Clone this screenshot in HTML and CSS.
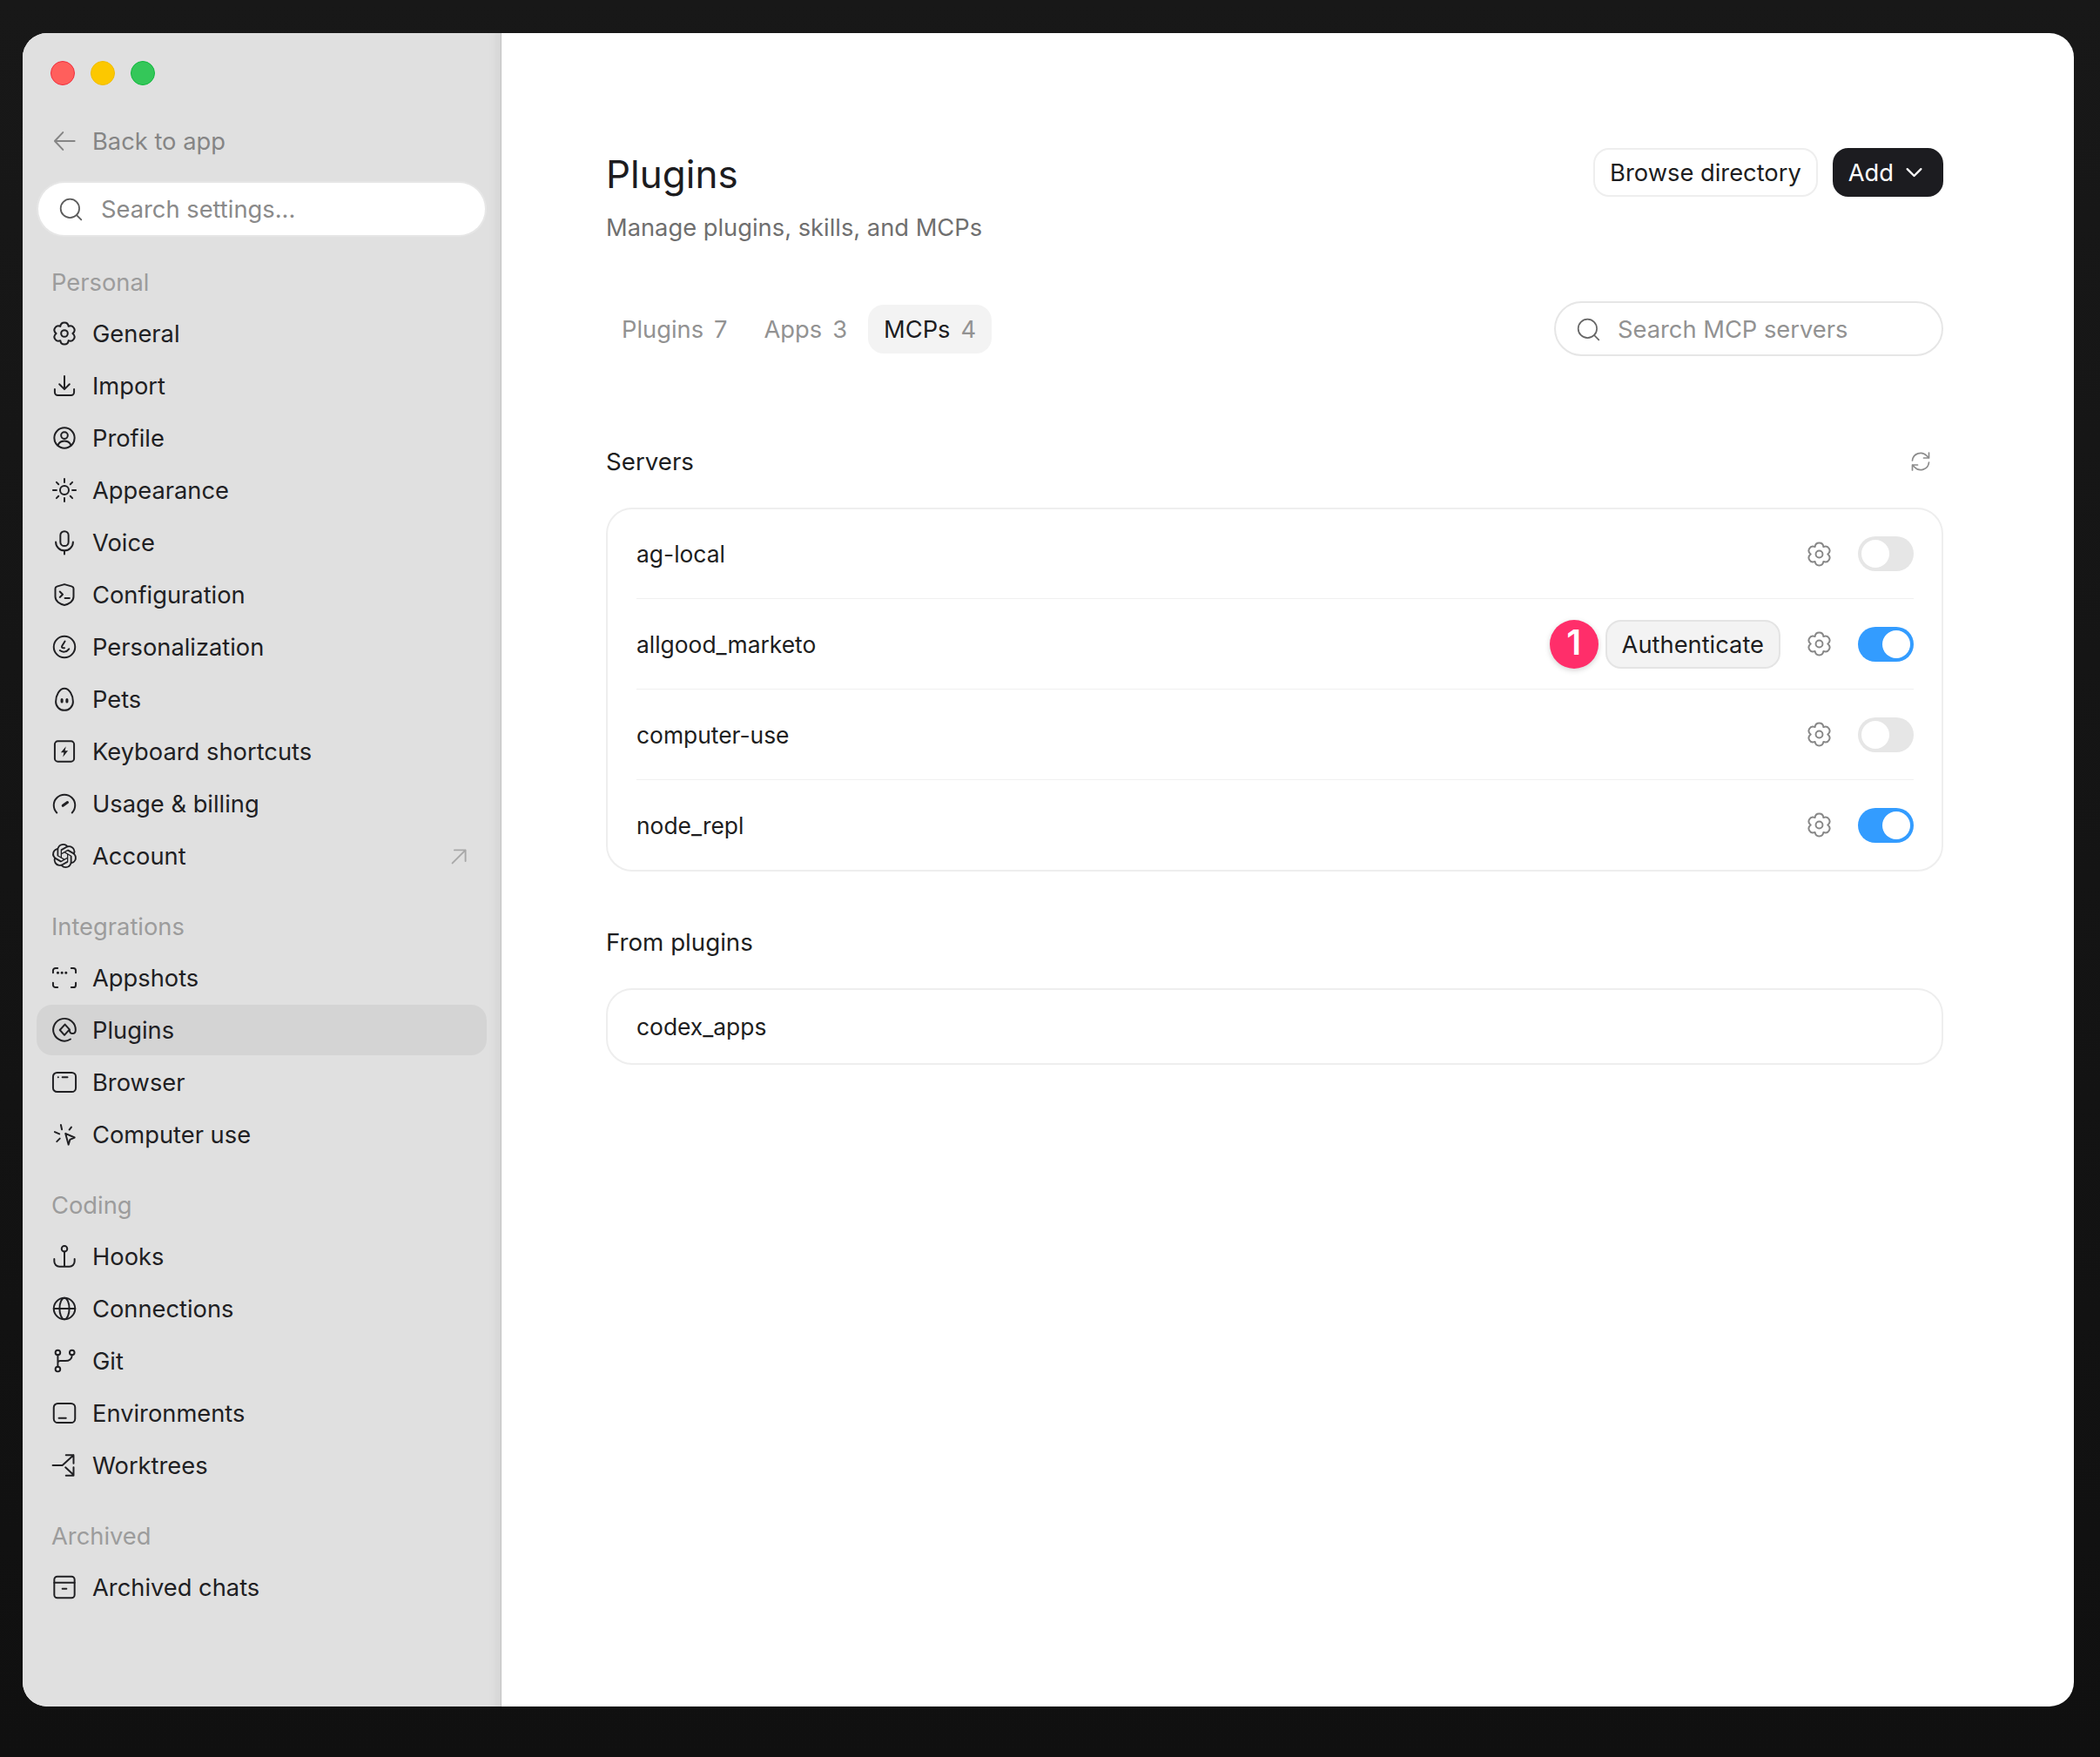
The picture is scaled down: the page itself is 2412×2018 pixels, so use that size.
FILE: index.html
```html
<!DOCTYPE html>
<html lang="en">
<head>
    <meta charset="UTF-8">
    <title>Settings • Plugins</title>
    <link rel="stylesheet" href="styles.css">
</head>
<body>
    <svg class="defs" width="0" height="0">
        <symbol id="i-gear" viewBox="1 1 22 22"><path d="M8.300 5.590C8.830 .95 15.170 .95 15.700 5.590C19.990 3.730 23.160 9.220 19.400 12C23.160 14.780 19.990 20.270 15.700 18.410C15.170 23.050 8.830 23.050 8.300 18.410C4.010 20.270 .84 14.780 4.600 12C.84 9.220 4.010 3.730 8.300 5.590Z"/><circle cx="12" cy="12" r="3"/></symbol>
        <symbol id="i-search" viewBox="0 0 24 24"><circle cx="11" cy="11" r="9.500"/><path d="M17.800 17.800 22.500 22.500"/></symbol>
    </svg>

    <div class="window">
        <!-- Sidebar -->
        <aside class="sidebar">
            <div class="lights">
                <span class="light red"></span>
                <span class="light yellow"></span>
                <span class="light green"></span>
            </div>

            <div class="nav-item back">
                <svg class="icon" viewBox="0 0 24 24"><path d="M22 12H2.500M10.500 3.500 2.500 12l8 8.500"/></svg>
                Back to app
            </div>

            <div class="side-search">
                <svg class="icon"><use href="#i-search"/></svg>
                Search settings...
            </div>

            <div class="nav-section first">
                <div class="nav-label">Personal</div>
                <div class="nav-item"><svg class="icon gear-icon"><use href="#i-gear"/></svg>General</div>
                <div class="nav-item"><svg class="icon" viewBox="0 0 24 24"><path d="M12 2.500v12.500M7 10.500l5 5 5-5M2.500 15.500v3a3 3 0 0 0 3 3h13a3 3 0 0 0 3-3v-3"/></svg>Import</div>
                <div class="nav-item"><svg class="icon" viewBox="0 0 24 24"><circle cx="12" cy="12" r="10"/><circle cx="12" cy="9.500" r="3.300"/><path d="M5.500 19.500c1-3 3.500-4.500 6.500-4.500s5.500 1.500 6.500 4.500"/></svg>Profile</div>
                <div class="nav-item"><svg class="icon" viewBox="0 0 24 24"><circle cx="12" cy="12" r="4.300"/><path d="M12 .8v3.400M12 19.800v3.400M.8 12h3.400M19.800 12h3.400M4.200 4.200l2 2M17.800 17.800l2 2M4.200 19.800l2-2M17.800 6.200l2-2"/></svg>Appearance</div>
                <div class="nav-item"><svg class="icon" viewBox="0 0 24 24"><rect x="8" y="1" width="8" height="14.500" rx="4"/><path d="M3.500 11.500a8.500 8.500 0 0 0 17 0M12 20v3.500"/></svg>Voice</div>
                <div class="nav-item"><svg class="icon" viewBox="0 0 24 24"><path d="M12 1.800 19.500 4a2 2 0 0 1 1.500 2v8c0 4.500-4.500 7.500-9 8.200-4.500-.7-9-3.700-9-8.200V6a2 2 0 0 1 1.500-2ZM7.500 9l2.800 2.800-2.800 2.700M12.500 15.500h4.500"/></svg>Configuration</div>
                <div class="nav-item"><svg class="icon" viewBox="0 0 24 24"><circle cx="12" cy="12" r="10.500"/><path d="M12.500 6.500 9.600 11.200c-.6 1.200.3 2.300 2.400 1.800M7.500 15.500c2.500 2 6.500 2 9-1.500"/></svg>Personalization</div>
                <div class="nav-item"><svg class="icon" viewBox="0 0 24 24"><path d="M12 1.500c4.800 0 8.500 6.500 8.500 13a8.500 8.500 0 0 1-17 0c0-6.500 3.700-13 8.500-13Z"/><path class="thick" d="M9.500 12.500v2M14.500 12.500v2"/></svg>Pets</div>
                <div class="nav-item"><svg class="icon" viewBox="0 0 24 24"><rect x="2.500" y="2" width="19" height="20" rx="3"/><path class="solid" d="M13.500 7 8.500 13h3l-1 4.500 5-6.200h-3Z"/></svg>Keyboard shortcuts</div>
                <div class="nav-item"><svg class="icon" viewBox="0 0 24 24"><path d="M4.500 21a10.500 10.500 0 1 1 15 0"/><path class="thick" d="M10.500 14 15 10.800"/></svg>Usage &amp; billing</div>
                <div class="nav-item"><svg class="icon" viewBox="0 0 24 24"><path class="solid" d="M22.2819 9.8211a5.9847 5.9847 0 0 0-.5157-4.9108 6.0462 6.0462 0 0 0-6.5098-2.9A6.0651 6.0651 0 0 0 4.9807 4.1818a5.9847 5.9847 0 0 0-3.9977 2.9 6.0462 6.0462 0 0 0 .7427 7.0966 5.98 5.98 0 0 0 .511 4.9107 6.051 6.051 0 0 0 6.5146 2.9001A5.9847 5.9847 0 0 0 13.2599 24a6.0557 6.0557 0 0 0 5.7718-4.2058 5.9894 5.9894 0 0 0 3.9977-2.9001 6.0557 6.0557 0 0 0-.7475-7.0729zm-9.022 12.6081a4.4755 4.4755 0 0 1-2.8764-1.0408l.1419-.0804 4.7783-2.7582a.7948.7948 0 0 0 .3927-.6813v-6.7369l2.02 1.1686a.071.071 0 0 1 .038.052v5.5826a4.504 4.504 0 0 1-4.4945 4.4944zm-9.6607-4.1254a4.4708 4.4708 0 0 1-.5346-3.0137l.142.0852 4.783 2.7582a.7712.7712 0 0 0 .7806 0l5.8428-3.3685v2.3324a.0804.0804 0 0 1-.0332.0615L9.74 19.9502a4.4992 4.4992 0 0 1-6.1408-1.6464zM2.3408 7.8956a4.485 4.485 0 0 1 2.3655-1.9728V11.6a.7664.7664 0 0 0 .3879.6765l5.8144 3.3543-2.0201 1.1685a.0757.0757 0 0 1-.071 0l-4.8303-2.7865A4.504 4.504 0 0 1 2.3408 7.872zm16.5963 3.8558L13.1038 8.364 15.1192 7.2a.0757.0757 0 0 1 .071 0l4.8303 2.7913a4.4944 4.4944 0 0 1-.6765 8.1042v-5.6772a.79.79 0 0 0-.407-.667zm2.0107-3.0231l-.142-.0852-4.7735-2.7818a.7759.7759 0 0 0-.7854 0L9.409 9.2297V6.8974a.0662.0662 0 0 1 .0284-.0615l4.8303-2.7866a4.4992 4.4992 0 0 1 6.6802 4.66zM8.3065 12.863l-2.02-1.1638a.0804.0804 0 0 1-.038-.0567V6.0742a4.4992 4.4992 0 0 1 7.3757-3.4537l-.142.0805L8.704 5.459a.7948.7948 0 0 0-.3927.6813zm1.0976-2.3654l2.602-1.4998 2.6069 1.4998v2.9994l-2.5974 1.4997-2.6067-1.4997Z"/></svg>Account<svg class="external" viewBox="0 0 24 24"><path d="M2 22 21 3M5 3h16v16"/></svg></div>
            </div>

            <div class="nav-section">
                <div class="nav-label">Integrations</div>
                <div class="nav-item"><svg class="icon" viewBox="0 0 24 24"><path d="M.8 7V5A2.500 2.500 0 0 1 3.300 2.500h2M18.700 2.500h2A2.500 2.500 0 0 1 23.200 5v2M23.200 17v2a2.500 2.500 0 0 1-2.500 2.500h-2M5.300 21.500h-2A2.500 2.500 0 0 1 .8 19v-2"/><path class="thick" d="M5.500 7h.1M9.500 7h.1M13.500 7h.1"/></svg>Appshots</div>
                <div class="nav-item active"><svg class="icon" viewBox="0 0 24 24"><path d="M18 21a11 11 0 1 1 5-9c0 2-1 3.500-3 3.500s-3-1.500-3-3.500"/><path d="M12.500 6.500 17 11.500 12 17 7.500 12Z"/></svg>Plugins</div>
                <div class="nav-item"><svg class="icon" viewBox="0 0 24 24"><rect x=".8" y="2.500" width="22.400" height="19" rx="4"/><path d="M5.800 7h.1M10 7h5"/></svg>Browser</div>
                <div class="nav-item"><svg class="icon" viewBox="0 0 24 24"><path d="M8.500 2.500 9.500 7M18.800 4.800l-2 2.500M2.500 9.500 7 11.500M7.500 16l-3 3M13 11l9 4-4.500 2-1.500 5Z"/></svg>Computer use</div>
            </div>

            <div class="nav-section">
                <div class="nav-label">Coding</div>
                <div class="nav-item"><svg class="icon" viewBox="0 0 24 24"><circle cx="12" cy="4.500" r="2.800"/><path d="M12 7.300V22M2 14.500v2.500a5 5 0 0 0 5 5h10a5 5 0 0 0 5-5v-2.500"/></svg>Hooks</div>
                <div class="nav-item"><svg class="icon" viewBox="0 0 24 24"><circle cx="12" cy="12" r="10.500"/><ellipse cx="12" cy="12" rx="4.800" ry="10.500"/><path d="M1.500 12h21"/></svg>Connections</div>
                <div class="nav-item"><svg class="icon" viewBox="0 0 24 24"><circle cx="5.500" cy="3.800" r="2.400"/><circle cx="5.500" cy="20.200" r="2.400"/><circle cx="19.500" cy="3.800" r="2.400"/><path d="M5.500 6.200v11.600M19.500 6.200c0 4-3 5.800-6.500 5.800H8c-1.500 0-2.500 1-2.500 2"/></svg>Git</div>
                <div class="nav-item"><svg class="icon" viewBox="0 0 24 24"><rect x="1.500" y="2.500" width="21" height="19" rx="4"/><path d="M6.500 17h7"/></svg>Environments</div>
                <div class="nav-item"><svg class="icon" viewBox="0 0 24 24"><path d="M.5 12H10L21 2M13.500 2H21v8M13 14l8 7.500M21 14v8h-7.500"/></svg>Worktrees</div>
            </div>

            <div class="nav-section">
                <div class="nav-label">Archived</div>
                <div class="nav-item"><svg class="icon" viewBox="0 0 24 24"><rect x="2" y="1.500" width="20" height="21" rx="3"/><path d="M2 7.500h20M10 13.500h4"/></svg>Archived chats</div>
            </div>
        </aside>

        <!-- Main panel -->
        <main class="main">
            <div class="page-header">
                <div>
                    <h1>Plugins</h1>
                    <p class="subtitle">Manage plugins, skills, and MCPs</p>
                </div>
                <div class="header-actions">
                    <div class="btn">Browse directory</div>
                    <div class="btn dark">Add <svg class="chevron" viewBox="0 0 24 24"><path d="M3 7l9 9 9-9"/></svg></div>
                </div>
            </div>

            <div class="toolbar">
                <div class="tabs">
                    <div class="tab">Plugins <span class="count">7</span></div>
                    <div class="tab">Apps <span class="count">3</span></div>
                    <div class="tab active">MCPs <span class="count">4</span></div>
                </div>
                <div class="mcp-search">
                    <svg class="icon"><use href="#i-search"/></svg>
                    Search MCP servers
                </div>
            </div>

            <div class="section-title servers">
                Servers
                <svg class="refresh" viewBox="0 0 24 24"><path d="M2.500 11A9.500 9.500 0 0 1 19 5.500l2.500 2.500M21.500 2v6h-6M21.500 13A9.500 9.500 0 0 1 5 18.500L2.500 16M2.500 22v-6h6"/></svg>
            </div>
            <div class="card">
                <div class="row">
                    <span class="row-name">ag-local</span>
                    <svg class="gear"><use href="#i-gear"/></svg>
                    <span class="toggle"></span>
                </div>
                <div class="row">
                    <span class="row-name">allgood_marketo</span>
                    <span class="step-badge">1</span>
                    <span class="auth-btn">Authenticate</span>
                    <svg class="gear"><use href="#i-gear"/></svg>
                    <span class="toggle on"></span>
                </div>
                <div class="row">
                    <span class="row-name">computer-use</span>
                    <svg class="gear"><use href="#i-gear"/></svg>
                    <span class="toggle"></span>
                </div>
                <div class="row">
                    <span class="row-name">node_repl</span>
                    <svg class="gear"><use href="#i-gear"/></svg>
                    <span class="toggle on"></span>
                </div>
            </div>

            <div class="section-title plugins">From plugins</div>
            <div class="card single">
                <div class="row">
                    <span class="row-name">codex_apps</span>
                </div>
            </div>
        </main>
    </div>
</body>
</html>
```

FILE: styles.css
```css
* {
    margin: 0;
    padding: 0;
    box-sizing: border-box;
}

body {
    font-family: Inter, "Noto Sans", sans-serif;
    background: linear-gradient(180deg, #181818 0%, #101010 100%);
    height: 2018px;
    padding: 38px 30px 0 26px;
    color: #1d1d20;
    font-size: 27.3px;
    overflow: hidden;
}

.defs {
    position: absolute;
}

svg {
    fill: none;
    stroke: currentColor;
    stroke-linecap: round;
    stroke-linejoin: round;
    flex-shrink: 0;
    overflow: visible;
}

.solid {
    fill: currentColor;
    stroke: none;
}

.thick {
    stroke-width: 2.6;
}

.window {
    display: flex;
    height: 1922px;
    background: #fff;
    border-radius: 28px;
    overflow: hidden;
}

/* Sidebar */
.sidebar {
    width: 550px;
    padding: 32px 16px 0;
    background: #e0e0e0;
    border-right: 1px solid #c2c2c2;
    box-shadow: inset -14px 0 14px -12px rgba(0, 0, 0, 0.08);
}

.lights {
    display: flex;
    gap: 18px;
    padding-left: 16px;
    height: 63px;
}

.light {
    width: 28px;
    height: 28px;
    border-radius: 50%;
}

.light.red {
    background: #ff5f5c;
    border: 1px solid #f0303f;
}

.light.yellow {
    background: #fcc800;
    border: 1px solid #f0bc00;
}

.light.green {
    background: #34c759;
    border: 1px solid #12b83e;
}

.nav-item {
    display: flex;
    align-items: center;
    gap: 18px;
    height: 58px;
    margin-bottom: 2px;
    padding: 0 18px;
    border-radius: 18px;
    color: #202023;
}

.nav-item .icon {
    width: 28px;
    height: 28px;
    stroke-width: 1.7;
}

.nav-item .icon.gear-icon {
    stroke-width: 1.6;
}

.nav-item.active {
    background: #d4d4d4;
}

.nav-item.back {
    margin-bottom: 0;
    color: #858585;
}

.external {
    margin-left: auto;
    margin-right: 4px;
    width: 19px;
    height: 19px;
    color: #a8a8a8;
    stroke-width: 2.4;
}

.side-search {
    display: flex;
    align-items: center;
    gap: 21px;
    height: 60px;
    margin: 19px 2px 0;
    padding-left: 24px;
    background: #fff;
    border-radius: 30px;
    box-shadow: 0 0 0 2px #e6e6e6;
    color: #8a8a8a;
}

.side-search .icon {
    width: 27px;
    height: 27px;
    stroke-width: 1.6;
    color: #5c5c5c;
}

.nav-section {
    margin-bottom: 24px;
}

.nav-section.first {
    margin-top: 26px;
}

.nav-label {
    height: 58px;
    line-height: 58px;
    padding-left: 17px;
    color: #9c9c9c;
}

/* Main panel */
.main {
    flex: 1;
    padding: 132px 150px 0 120px;
}

.page-header {
    display: flex;
    justify-content: space-between;
    align-items: flex-start;
}

h1 {
    font-size: 44px;
    font-weight: 400;
    line-height: 60px;
    color: #1c1c1f;
}

.subtitle {
    margin-top: 12px;
    line-height: 40px;
    color: #6f6f6f;
}

.header-actions {
    display: flex;
    gap: 17px;
}

.btn {
    display: flex;
    align-items: center;
    height: 56px;
    padding: 0 17px;
    border: 2px solid #eee;
    border-radius: 18px;
}

.btn.dark {
    gap: 13px;
    padding: 0 21px 0 16px;
    background: #1c1c20;
    border-color: #1c1c20;
    color: #fff;
}

.chevron {
    width: 21px;
    height: 21px;
    stroke-width: 2.6;
}

.toolbar {
    display: flex;
    justify-content: space-between;
    align-items: center;
    margin-top: 64px;
}

.tabs {
    display: flex;
    gap: 6px;
}

.tab {
    display: flex;
    align-items: center;
    height: 56px;
    padding: 1px 18px 0;
    border-radius: 18px;
    color: #929292;
}

.tab .count {
    margin-left: 12px;
    color: #929292;
}

.tab.active {
    background: #f3f3f3;
    color: #1c1c1f;
}

.mcp-search {
    display: flex;
    align-items: center;
    gap: 20px;
    width: 447px;
    height: 63px;
    padding: 1px 0 0 24px;
    border: 2px solid #e6e6e6;
    border-radius: 32px;
    color: #929292;
}

.mcp-search .icon {
    width: 27px;
    height: 27px;
    stroke-width: 1.5;
    color: #666;
}

.section-title {
    display: flex;
    justify-content: space-between;
    align-items: center;
    height: 40px;
    font-size: 27.7px;
    color: #1d1d20;
}

.section-title.servers {
    margin-top: 101px;
}

.section-title.plugins {
    margin-top: 61px;
}

.refresh {
    width: 24px;
    height: 24px;
    margin-right: 14px;
    color: #8c8c8c;
    stroke-width: 1.7;
}

.card {
    margin-top: 33px;
    padding: 0 32px 0 33px;
    border: 2px solid #eee;
    border-radius: 30px;
}

.row {
    display: flex;
    align-items: center;
    height: 104px;
    border-bottom: 1px solid #f0f0f0;
}

.row:first-child,
.row:last-child {
    height: 103px;
}

.row:last-child {
    border-bottom: none;
}

.card.single .row {
    height: 84px;
}

.row-name {
    margin-right: auto;
    font-size: 26.4px;
    color: #1d1d20;
}

.gear {
    width: 29px;
    height: 29px;
    margin: 0 30px;
    color: #888;
    stroke-width: 1.5;
}

.step-badge {
    width: 56px;
    height: 56px;
    margin-right: 8px;
    border-radius: 50%;
    background: #ff2e6a;
    box-shadow: 0 2px 6px rgba(0, 0, 0, 0.18);
    color: #fff;
    font-size: 40px;
    font-weight: 600;
    line-height: 52px;
    text-align: center;
}

.auth-btn {
    display: flex;
    align-items: center;
    height: 56px;
    padding: 1px 17px 0;
    background: #f3f3f3;
    border: 2px solid #e4e4e4;
    border-radius: 18px;
}

.toggle {
    position: relative;
    width: 64px;
    height: 40px;
    border-radius: 20px;
    background: #e6e6e6;
}

.toggle::after {
    content: "";
    position: absolute;
    top: 4px;
    left: 4px;
    width: 32px;
    height: 32px;
    border-radius: 50%;
    background: #fff;
}

.toggle.on {
    background: #339cff;
}

.toggle.on::after {
    left: 28px;
}
```
